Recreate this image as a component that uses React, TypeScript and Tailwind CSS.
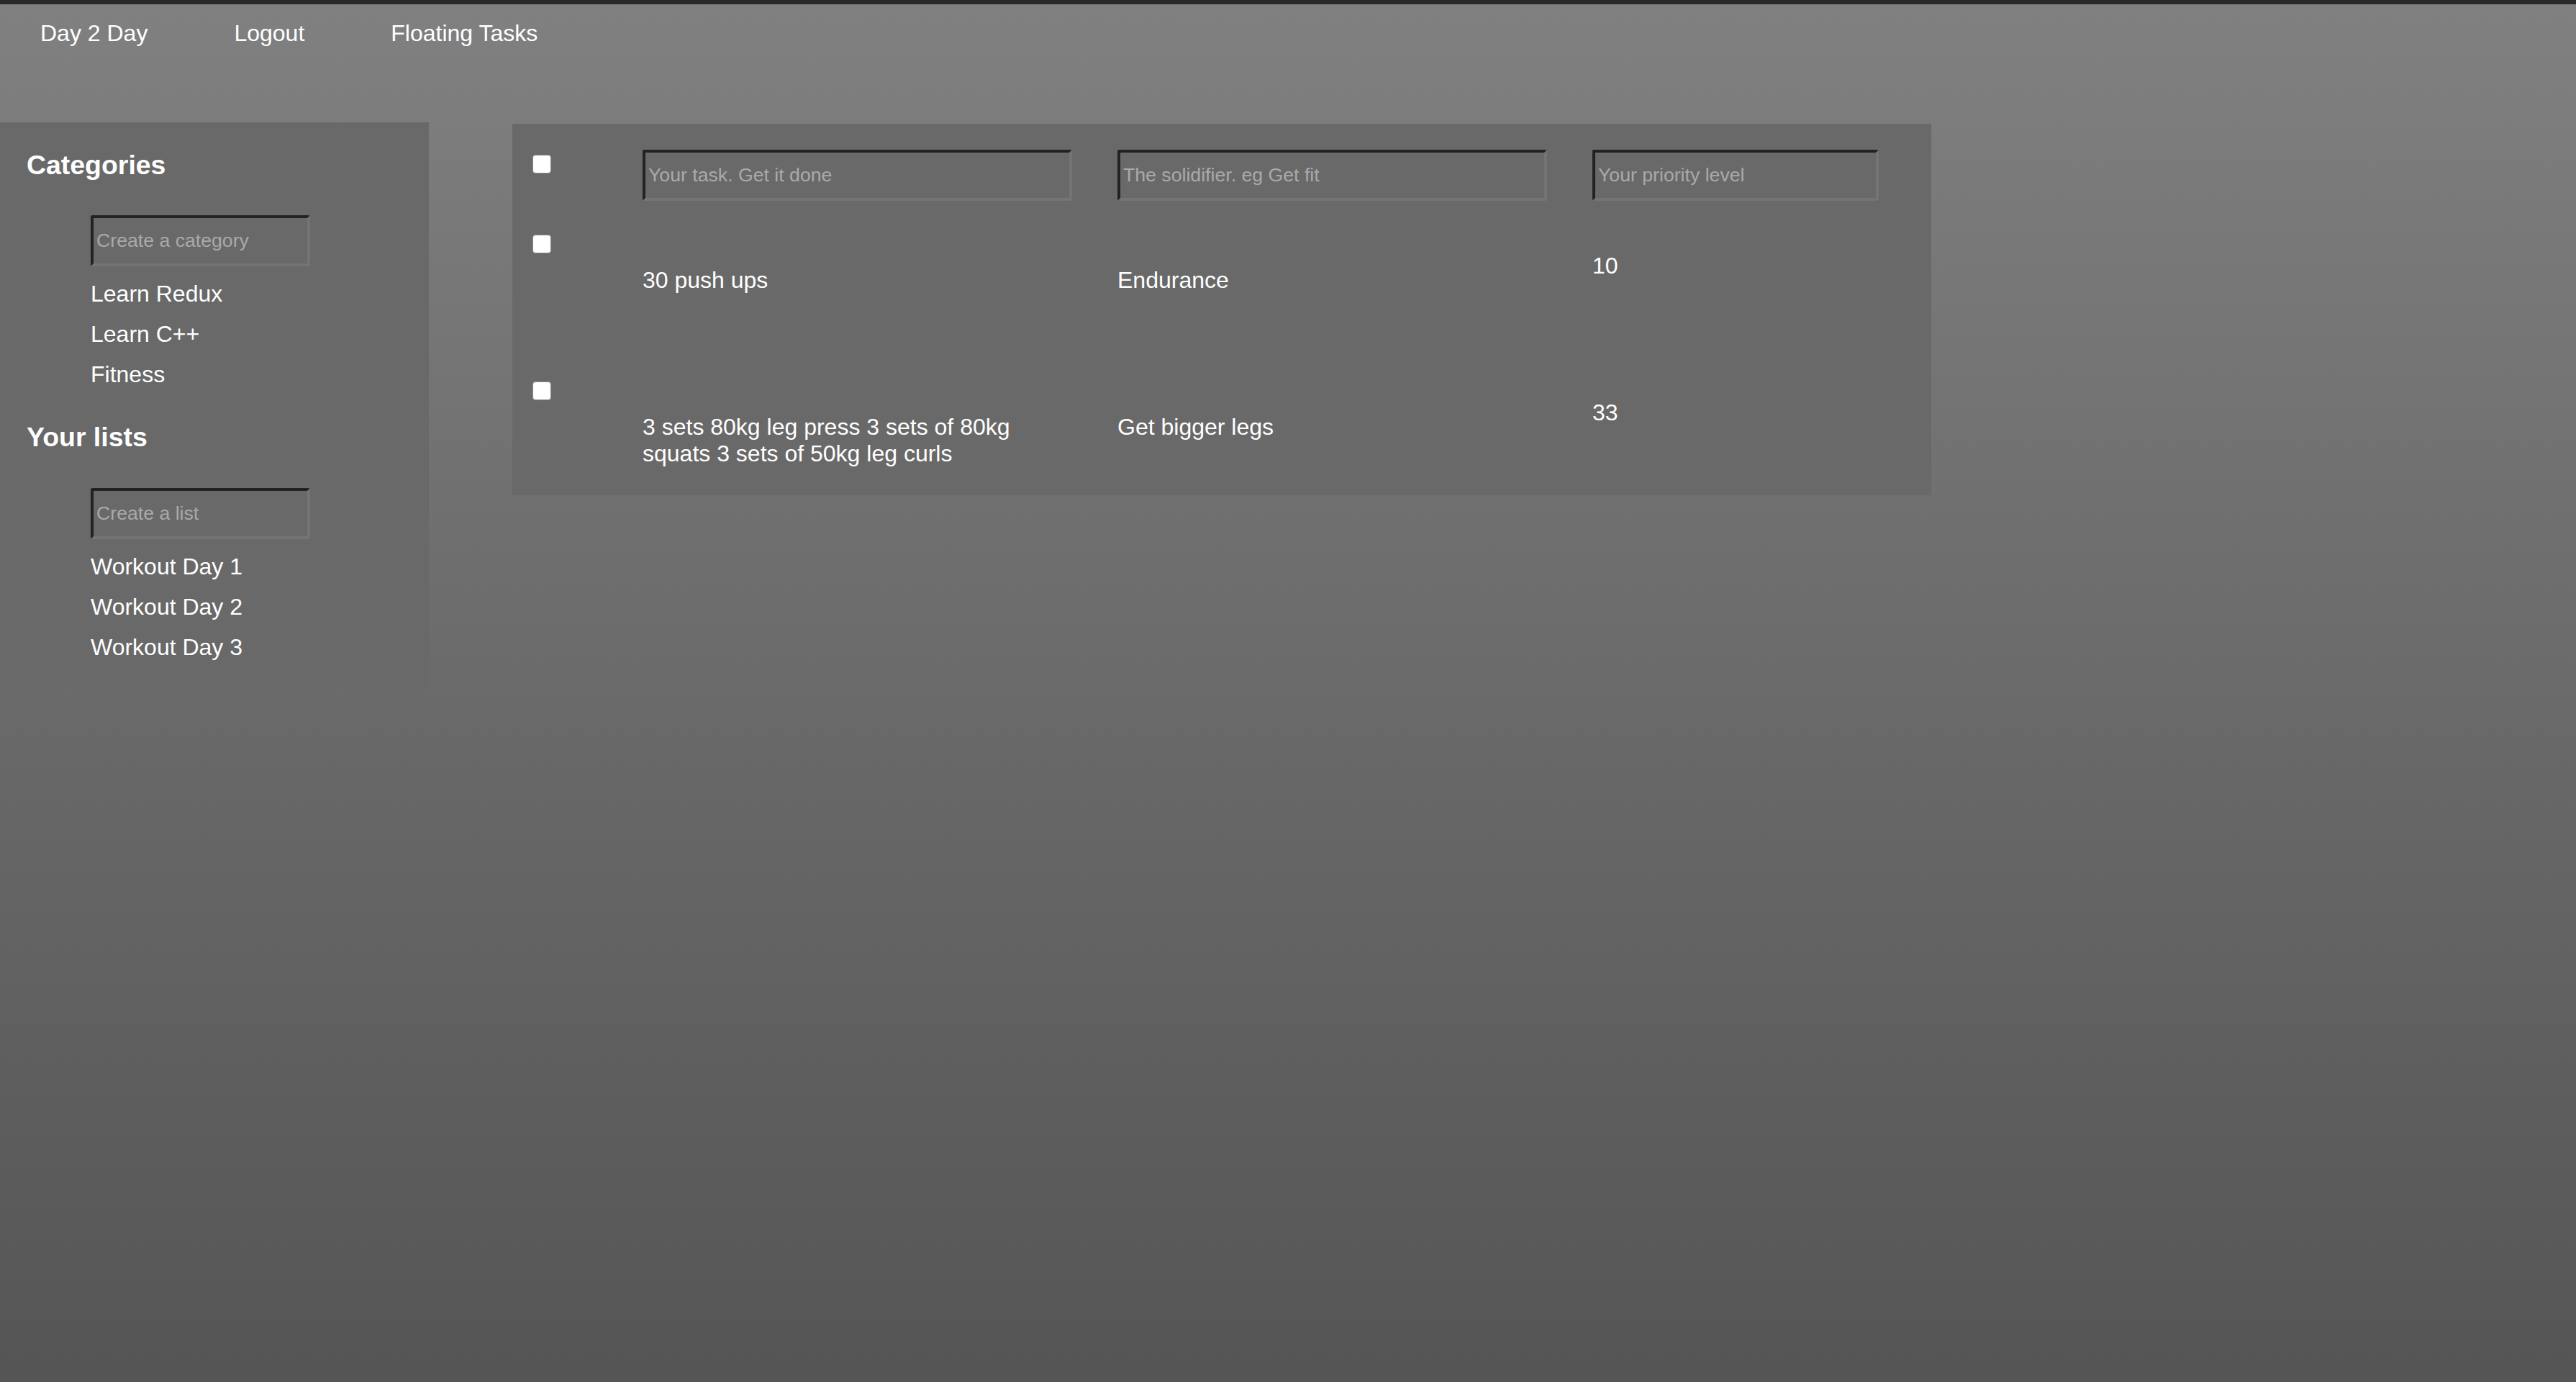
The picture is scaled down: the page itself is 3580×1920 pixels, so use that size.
import React from 'react';

const categories = ['Learn Redux', 'Learn C++', 'Fitness'];
const lists = ['Workout Day 1', 'Workout Day 2', 'Workout Day 3'];

const tasks = [
  { id: 1, task: '30 push ups', solidifier: 'Endurance', priority: 10 },
  { id: 2, task: '3 sets 80kg leg press 3 sets of 80kg squats 3 sets of 50kg leg curls', solidifier: 'Get bigger legs', priority: 33 },
];

const inputClass =
  'h-[71px] bg-transparent rounded-[3px] border-4 border-t-[#222222] border-l-[#222222] border-b-[#747474] border-r-[#747474] pl-[4px] text-[26.67px] text-white placeholder:text-[#a9a9a9] outline-none';

const Checkbox = () => (
  <input
    type="checkbox"
    className="appearance-none w-[26px] h-[26px] bg-white rounded-[4px] border border-[#8a8a8a] block"
  />
);

const Sidebar = () => (
  <aside className="w-[596px] shrink-0 bg-[#696969] pt-[38px] pb-[30px]">
    <h3 className="pl-[37px] text-[37.44px] leading-[43px] font-bold">Categories</h3>
    <div className="pl-[126px]">
      <input className={`${inputClass} w-[305px] mt-[48px] block`} placeholder="Create a category" />
      <ul className="mt-[10px]">
        {categories.map((c) => (
          <li key={c} className="leading-[56px]">{c}</li>
        ))}
      </ul>
    </div>
    <h3 className="pl-[37px] mt-[38px] text-[37.44px] leading-[43px] font-bold">Your lists</h3>
    <div className="pl-[126px]">
      <input className={`${inputClass} w-[305px] mt-[49px] block`} placeholder="Create a list" />
      <ul className="mt-[10px]">
        {lists.map((l) => (
          <li key={l} className="leading-[56px]">{l}</li>
        ))}
      </ul>
    </div>
  </aside>
);

const TaskTable = () => (
  <section className="ml-[116px] mt-[2px] w-[1972px] bg-[#696969] pt-[36px] pb-[39px]">
    <div className="grid grid-cols-[181px_660px_660px_1fr] h-[71px]">
      <div className="pl-[28px] pt-[7px]"><Checkbox /></div>
      <input className={`${inputClass} w-[597px]`} placeholder="Your task. Get it done" />
      <input className={`${inputClass} w-[597px]`} placeholder="The solidifier. eg Get fit" />
      <input className={`${inputClass} w-[398px]`} placeholder="Your priority level" />
    </div>
    {tasks.map((t, i) => (
      <div
        key={t.id}
        className={i === 0 ? 'grid grid-cols-[181px_660px_660px_1fr] mt-[47px] h-[204px]' : 'grid grid-cols-[181px_660px_660px_1fr]'}
      >
        <div className="pl-[28px]"><Checkbox /></div>
        <p className="pt-[45px] w-[597px] leading-[36.8px]">{t.task}</p>
        <p className="pt-[45px] leading-[36.8px]">{t.solidifier}</p>
        <p className="pt-[25px] leading-[36.8px]">{t.priority}</p>
      </div>
    ))}
  </section>
);

export default function App() {
  return (
    <div className="min-h-[1920px] w-full bg-linear-to-b from-[#808080] to-[#555555] border-t-[6px] border-[#2a2a2a] text-white text-[32px] font-['Liberation_Sans',Arial,sans-serif]">
      <nav className="flex gap-[120px] pl-[56px] pt-[22px] leading-[37px]">
        <a className="cursor-pointer">Day 2 Day</a>
        <a className="cursor-pointer">Logout</a>
        <a className="cursor-pointer">Floating Tasks</a>
      </nav>
      <div className="flex items-start mt-[105px]">
        <Sidebar />
        <TaskTable />
      </div>
    </div>
  );
}
